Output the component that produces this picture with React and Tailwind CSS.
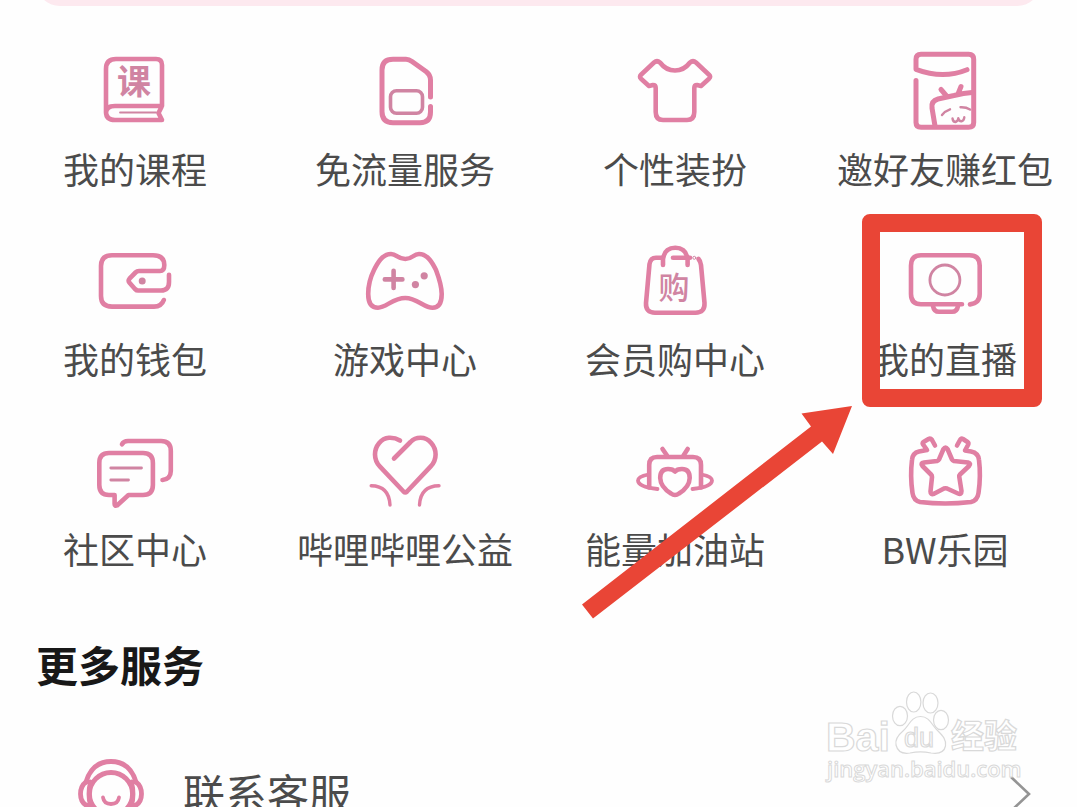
import React from "react";

const PINK = "#e07fa3";
const MUTED = "#d084a2";

function Icon({ children, weight = 4.6 }) {
  return (
    <svg
      viewBox="0 0 90 90"
      className="size-[90px] shrink-0"
      fill="none"
      stroke={PINK}
      strokeWidth={weight}
      strokeLinecap="round"
      strokeLinejoin="round"
      aria-hidden="true"
    >
      {children}
    </svg>
  );
}

function Glyph({ children, y, size, weight }) {
  return (
    <text
      x="44"
      y={y}
      fontSize={size}
      fontWeight={weight}
      textAnchor="middle"
      fill={MUTED}
      stroke="none"
      fontFamily="'Noto Sans CJK SC', sans-serif"
    >
      {children}
    </text>
  );
}

const CourseIcon = () => (
  <Icon>
    <path d="M72 60V19Q72 13 66 13H26Q16 13 16 23V66Q16 74 25 74H72L68.5 67L72 60H25Q16 60 16 67" />
    <path d="M30 66.5H66" stroke={MUTED} strokeWidth="1.8" />
    <Glyph y="48" size="34" weight="700">课</Glyph>
  </Icon>
);

const SimIcon = () => (
  <Icon weight={5}>
    <path d="M70.5 51V34Q70.5 29 66 25.5L52 15.5Q49 13.3 46 13.3H33Q22 13.3 22 24V65.5Q22 76.7 33 76.7H60Q70.5 76.7 70.5 66V60.5" />
    <rect x="30.5" y="44.7" width="32" height="22.6" rx="6" stroke={MUTED} strokeWidth="3.6" />
  </Icon>
);

const ShirtIcon = () => (
  <Icon>
    <path d="M24 16.5Q27 14 30 16.5Q36 24.5 45 24.5Q54 24.5 60 16.5Q63 14 66 16.5L79 28.7Q81 30.7 79 32.7L71 40L67 39Q64.3 39 64.3 42V66Q64.3 74 57 74H33Q25.7 74 25.7 66V42Q25.7 39 23 39L19 40L11 32.7Q9 30.7 11 28.7Z" />
  </Icon>
);

const RedPacketIcon = () => (
  <Icon weight={5}>
    <path d="M16 34.5V76.5Q16 81.3 21 81.3H68.7Q73.7 81.3 73.7 76.5V13.3Q73.7 8.3 68.7 8.3H21Q16 8.3 16 13.3V23.3Q43 33.5 67 23.7" />
    <path d="M35 80L32 62Q31 55 38 53L54 49.5Q64 47 72 46.5M41 43.5L47 50.5M61 40.5L58 48" />
    <path d="M42 69Q45 65 50 63.3M60.5 61.3Q66 61 70 63.5M52.5 72.5Q53 76 55.5 76Q58.3 75 58.3 72.3Q59 75.5 61.5 75.3Q64 74.5 64.3 71.3" stroke={MUTED} strokeWidth="2.4" />
  </Icon>
);

const WalletIcon = () => (
  <Icon>
    <path d="M73.8 64Q71.5 70.6 64 70.6H22Q11 70.6 11 60V30Q11 19.2 22 19.2H63Q74.3 19.2 74.3 29Q74.3 35 70 35H49Q47 35 45.5 36.5L39.5 42.7Q37.8 44.7 39.5 46.7L45 53Q46.5 54.5 48 54.5H71Q79 54.5 79 46V38.8" />
    <circle cx="52.2" cy="45" r="3.5" fill={MUTED} stroke="none" />
  </Icon>
);

const GameIcon = () => (
  <Icon>
    <path d="M45.3 23C37 23 37 18 31 18C22 18 17 28 14 34C10 42 8.2 50 8.2 58C8.2 66 11 71.7 18 71.7C26 71.7 33 62 45.3 62C57 62 64 71.7 72.5 71.7C79 71.7 81.7 66 81.7 58C81.7 50 79 42 76 34C73 28 68 18 59 18C53 18 53 23 45.3 23Z" />
    <path d="M33.6 34.8V52M24.8 43.4H42.4" stroke={MUTED} />
    <circle cx="64.2" cy="39.8" r="3.6" fill={MUTED} stroke="none" />
    <circle cx="55.4" cy="48.6" r="3.6" fill={MUTED} stroke="none" />
  </Icon>
);

const ShopIcon = () => (
  <Icon>
    <path d="M31 21.7H26Q20.5 21.7 19.5 28L16 67Q15.5 76.7 25 76.7H65.5Q75 76.7 74.5 67L71 29Q70.5 25 68.5 23" />
    <path d="M33 29V23Q34.5 11.8 45.3 11.8Q56 11.8 57.6 23V29" />
    <path d="M43 21.7H60" />
    <circle cx="64.3" cy="21.8" r="1.5" strokeWidth="1" stroke={MUTED} />
    <Glyph y="63" size="31" weight="500">购</Glyph>
  </Icon>
);

const LiveIcon = () => (
  <Icon>
    <path d="M62 68.2H21Q11 68.2 11 58V29.5Q11 19.2 21 19.2H69.5Q79.7 19.2 79.7 29.5V58Q79.7 67 70 68.4" />
    <path d="M33 70Q34 75.8 39 75.8H52Q57 75.8 58 70" />
    <circle cx="44.9" cy="44" r="15" stroke={MUTED} strokeWidth="2.8" />
  </Icon>
);

const CommunityIcon = () => (
  <Icon>
    <path d="M32 18.3Q33.5 15 38 15H71Q80.8 15 80.8 25V45Q80.8 53 72.5 54" />
    <path d="M19 27H53Q62.9 27 62.9 37V59Q62.9 69 53 69H38.5L27 79.5Q24.6 80.5 24.6 78V69H19Q9.3 69 9.3 59V37Q9.3 27 19 27Z" />
    <path d="M20.8 42H51.5M20.8 54H38.5" stroke={MUTED} strokeWidth="2.8" />
  </Icon>
);

const CharityIcon = () => (
  <Icon>
    <path d="M40 14.5Q35 11.5 29 11.8C21 12.5 15 20 15 28.5Q15 35.5 20 40.7L43.5 65.5Q45.3 67.2 47 65.5L70.5 40.7Q75.6 35.5 75.6 28.5C75.6 20 69 11.8 60.5 11.8Q54.5 11.8 50.5 16L34 32.5" />
    <path d="M11.2 59.8Q29 60 30 79M79 59.8Q60.5 60 59.5 79" strokeWidth="3.4" />
  </Icon>
);

const EnergyIcon = () => (
  <Icon>
    <path d="M19.2 61.5V39Q19.2 31 27 31H63Q71 31 71 39V61.5" />
    <path d="M32.5 23L37 29.5M57.7 23L53.5 29.5" />
    <path d="M18.5 48.5Q8 50.5 8 54.5Q8.5 61 27.5 63M71.5 48.5Q82 50.5 82 54.5Q81.5 61 62.5 63" strokeWidth="3.8" />
    <path d="M45 45.5Q43 43 38 43Q30.2 43 30.2 52Q30.5 61 41 67.5Q45 70.5 49 67.5Q59.5 61 59.7 52Q59.7 43 52 43Q47 43 45 45.5Z" />
  </Icon>
);

const ParkIcon = () => (
  <Icon weight={4.6}>
    <path d="M35 19.5L32 14Q30.5 12 28.5 13L23.5 16Q22 17.5 23.5 19L27 24L19 25.5Q12.5 27 12 34Q10 50 12.5 67Q13.5 74.5 20 76Q45 79 71 76Q77.5 74.5 78.5 67Q81 50 79 34Q78.5 27 71 25.5L65 24.5L68 19Q69 17 67.5 16L63 13Q61 12 60 14L57 19.5" />
    <path d="M43.5 23Q45.5 20 47.5 23L52 33.5Q52.5 34.5 54 35L68 36.5Q71.5 37.5 69 40L60 48.5Q59 49.5 59.3 51L61.5 65Q61.5 69 58 67.5L47 62.5Q45.5 62 44 62.5L34 67.8Q30.5 69 30.5 65.5L32 51Q32 49.5 31 48.5L22.5 40Q20 37 24 36.5L37 35Q38.5 34.5 39 33.5Z" />
  </Icon>
);

const services = [
  { label: "我的课程", icon: CourseIcon },
  { label: "免流量服务", icon: SimIcon },
  { label: "个性装扮", icon: ShirtIcon },
  { label: "邀好友赚红包", icon: RedPacketIcon },
  { label: "我的钱包", icon: WalletIcon },
  { label: "游戏中心", icon: GameIcon },
  { label: "会员购中心", icon: ShopIcon },
  { label: "我的直播", icon: LiveIcon, highlighted: true },
  { label: "社区中心", icon: CommunityIcon },
  { label: "哔哩哔哩公益", icon: CharityIcon },
  { label: "能量加油站", icon: EnergyIcon },
  { label: "BW乐园", icon: ParkIcon },
];

function Highlight() {
  return (
    <>
      <span className="pointer-events-none absolute -top-[22px] left-1/2 z-10 -ml-[83px] h-[193px] w-[180px] rounded-lg border-[18px] border-[#e94536]" />
      <svg
        viewBox="0 0 270 213"
        className="pointer-events-none absolute top-[170px] left-1/2 z-10 -ml-[363px] h-[213px] w-[270px]"
        aria-hidden="true"
      >
        <path
          d="M270 0L219.5 7.5L229 20.5L0 198.5L11 212.5L240 35.5L251 48Z"
          fill="#e94536"
        />
      </svg>
    </>
  );
}

function ServiceLink({ label, icon: IconShape, highlighted }) {
  return (
    <a href="#" className="relative flex flex-col items-center gap-2">
      <IconShape />
      <span className="text-4xl leading-[48px] whitespace-nowrap">{label}</span>
      {highlighted && <Highlight />}
    </a>
  );
}

function HeadsetIcon() {
  return (
    <svg
      viewBox="0 0 72 72"
      className="size-[72px] shrink-0"
      fill="none"
      stroke={PINK}
      strokeWidth="4.8"
      strokeLinecap="round"
      aria-hidden="true"
    >
      <circle cx="36" cy="36" r="21.5" />
      <path d="M11 24Q17 3.5 36 3.5Q55 3.5 61 24" />
      <path d="M11 24Q5.500 28 5.500 36Q5.500 46 15 49M61 24Q66.500 28 66.500 36Q66.500 46 57 49M15.500 24Q12.500 36 15.500 48M56.500 24Q59.500 36 56.500 48" />
      <path d="M28 39.5Q29 46 36 46Q43 46 44 39.5" strokeWidth="3.8" />
    </svg>
  );
}

function Watermark() {
  return (
    <svg
      viewBox="0 0 210 100"
      className="pointer-events-none absolute -top-[68px] right-[47px] h-[100px] w-[210px]"
      fill="#ffffff"
      stroke="#d9d9d9"
      strokeWidth="1.2"
      role="img"
      aria-label="Baidu 经验"
    >
      <text x="6" y="61" fontSize="41" fontWeight="700" fontFamily="'Liberation Sans', sans-serif">Bai</text>
      <ellipse cx="80" cy="26" rx="7.5" ry="9.7" />
      <ellipse cx="93.7" cy="12" rx="7.2" ry="10" />
      <ellipse cx="110.5" cy="13" rx="7.5" ry="10" />
      <ellipse cx="121" cy="30" rx="7.5" ry="9.7" />
      <path d="M100.5 26.5C91 26.5 89 36 83 41C77 46 75 50 76 55C78 63 84 64 90 63C97 61.5 104 61.5 111 63C118 64 124 63 125.5 56C126.5 50 123 46 118 41C112 36 110 26.5 100.5 26.5Z" />
      <text x="84" y="57" fontSize="27" fontFamily="'Liberation Sans', sans-serif">du</text>
      <text x="131" y="58" fontSize="33" fontWeight="700" fontFamily="'Noto Sans CJK SC', sans-serif">经验</text>
      <text x="7" y="87" fontSize="22" fontWeight="600" fontFamily="'Open Sans', sans-serif" strokeWidth="1">jingyan.baidu.com</text>
    </svg>
  );
}

export default function App() {
  return (
    <main className="h-screen overflow-hidden bg-[#fefefe] font-['Noto_Sans_CJK_SC',sans-serif] text-[#4b4b4b]">
      <div className="mx-9 -mt-[34px] h-10 rounded-b-3xl bg-[#fde9ef]" />

      <nav className="mt-10 -mr-[3px] grid grid-cols-4 gap-y-11">
        {services.map((service) => (
          <ServiceLink key={service.label} {...service} />
        ))}
      </nav>

      <section className="mt-16">
        <h2 className="px-9 text-[42px] leading-[56px] font-bold text-[#181818]">更多服务</h2>
        <div className="relative mt-[66px]">
          <a href="#" className="flex items-start gap-9 pr-11 pl-[75px]">
            <HeadsetIcon />
            <span className="flex-1 text-[42px] leading-[68px]">联系客服</span>
            <svg
              viewBox="0 0 24 40"
              className="h-10 w-6 self-center"
              fill="none"
              stroke="#949494"
              strokeWidth="2.6"
              aria-hidden="true"
            >
              <path d="M2 3L20 20L2 37" />
            </svg>
          </a>
          <Watermark />
        </div>
      </section>
    </main>
  );
}
